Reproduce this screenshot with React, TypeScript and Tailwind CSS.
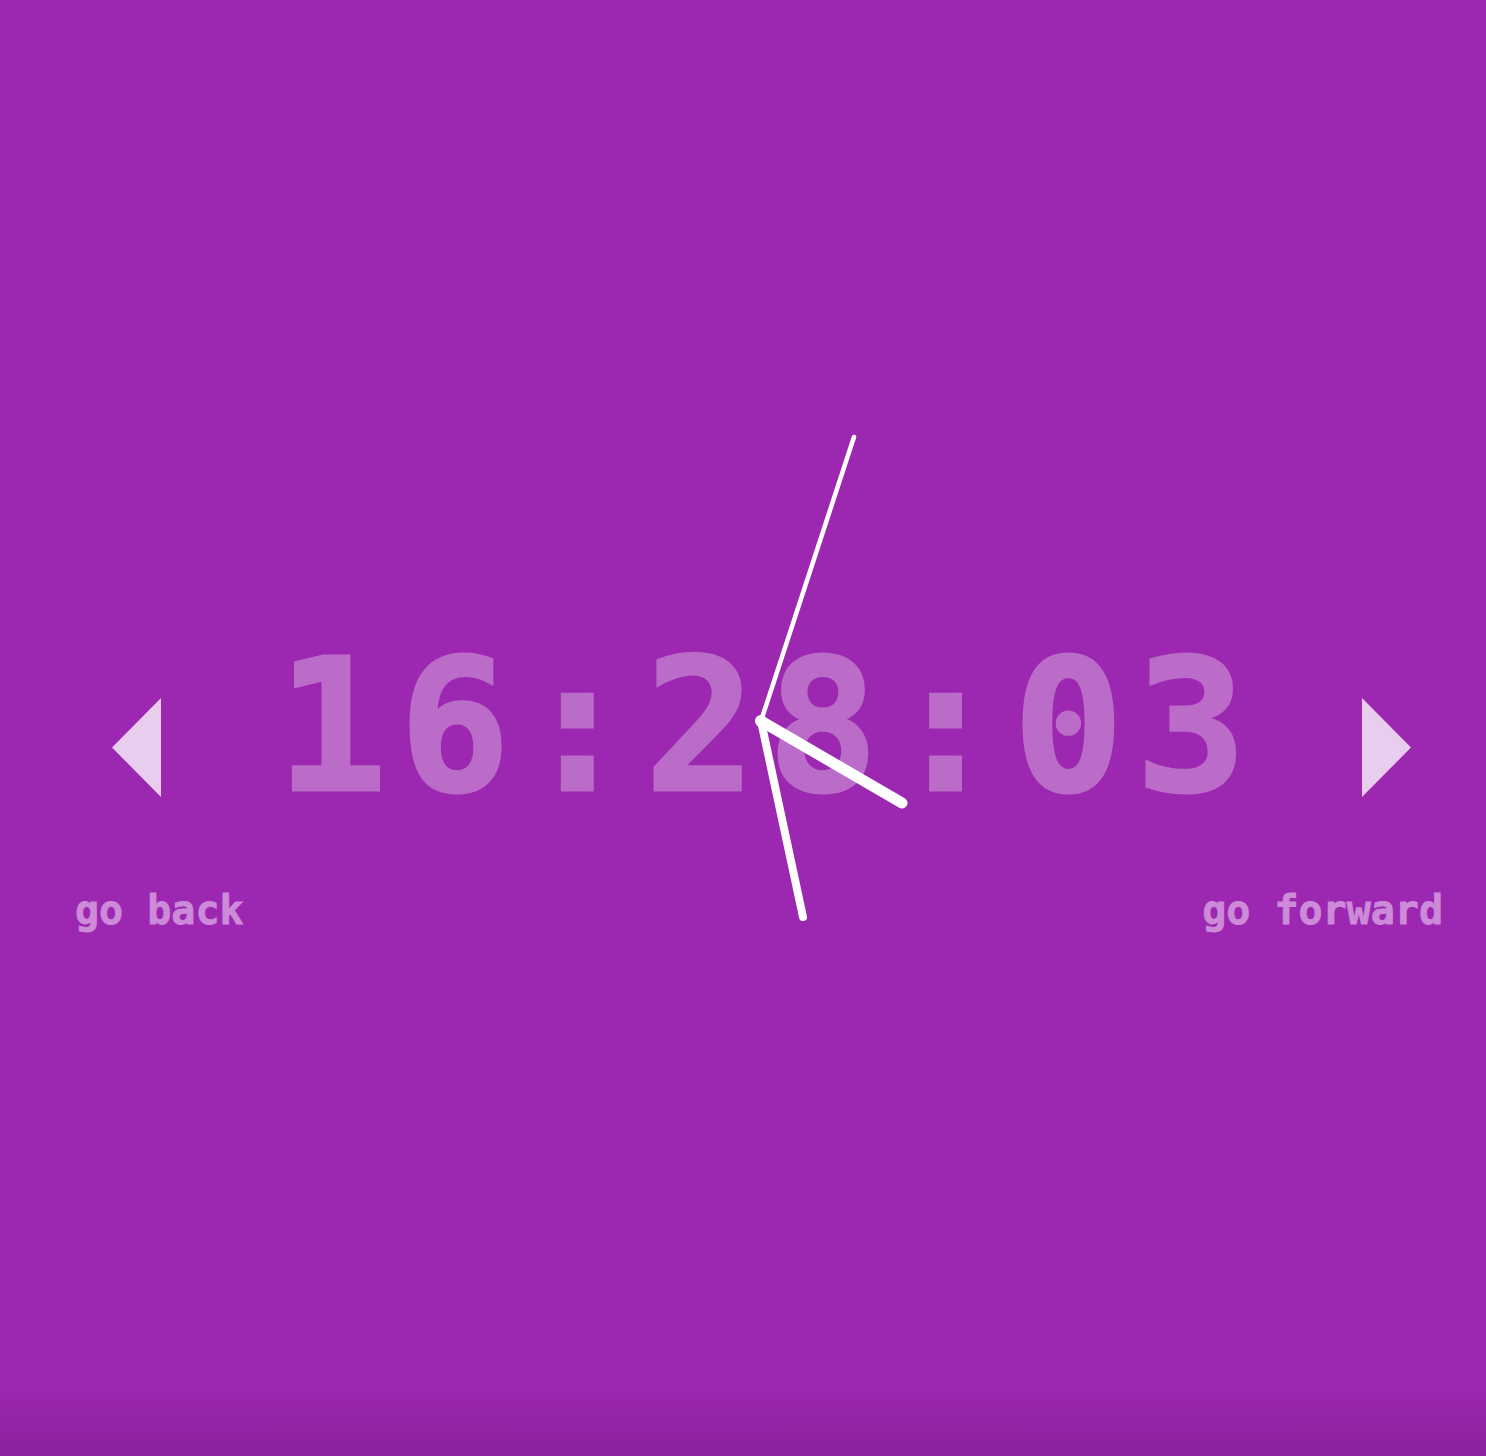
import React from "react";

const mono = { fontFamily: '"DejaVu Sans Mono", "Liberation Mono", monospace' };

export default function App() {
  const cx = 761;
  const cy = 721;
  return (
    <div className="relative flex min-h-[1456px] w-full flex-col overflow-hidden bg-[#9c27b0]" style={mono}>
      <div className="flex items-center pl-[112px] pr-[75px] pt-[634px]">
        <div className="h-[99px] w-[49px] bg-[#e9cdee] [clip-path:polygon(100%_0,100%_100%,0_50%)]" />
        <div className="flex flex-1 justify-center pb-[43px]">
          <span className="pl-[12px] text-[184px] font-bold leading-none tracking-[12px] text-[#bb6bc8] [-webkit-text-stroke:3px_#bb6bc8]">16:28:03</span>
        </div>
        <div className="h-[99px] w-[49px] bg-[#e9cdee] [clip-path:polygon(0_0,100%_50%,0_100%)]" />
      </div>
      <div className="mt-[29px] flex items-start justify-between pl-[75px] pr-[43px]">
        <span className="text-[40px] font-bold leading-none text-[#cd8ad9] [-webkit-text-stroke:0.8px_#cd8ad9]">go back</span>
        <span className="text-[40px] font-bold leading-none text-[#cd8ad9] [-webkit-text-stroke:0.8px_#cd8ad9]">go forward</span>
      </div>
      <div className="mt-auto h-[70px] w-full bg-gradient-to-b from-transparent to-[#8a229c]" />
      <svg className="pointer-events-none absolute left-0 top-0" width="1486" height="1456" viewBox="0 0 1486 1456">
        <line x1={cx} y1={cy} x2={902} y2={803} stroke="#fff" strokeWidth={11} strokeLinecap="round" />
        <line x1={cx} y1={cy} x2={803} y2={917} stroke="#fff" strokeWidth={8} strokeLinecap="round" />
        <line x1={cx} y1={cy} x2={854} y2={437} stroke="#fff" strokeWidth={4.5} strokeLinecap="round" />
        <circle cx={cx} cy={cy} r={6} fill="#fff" />
      </svg>
    </div>
  );
}
